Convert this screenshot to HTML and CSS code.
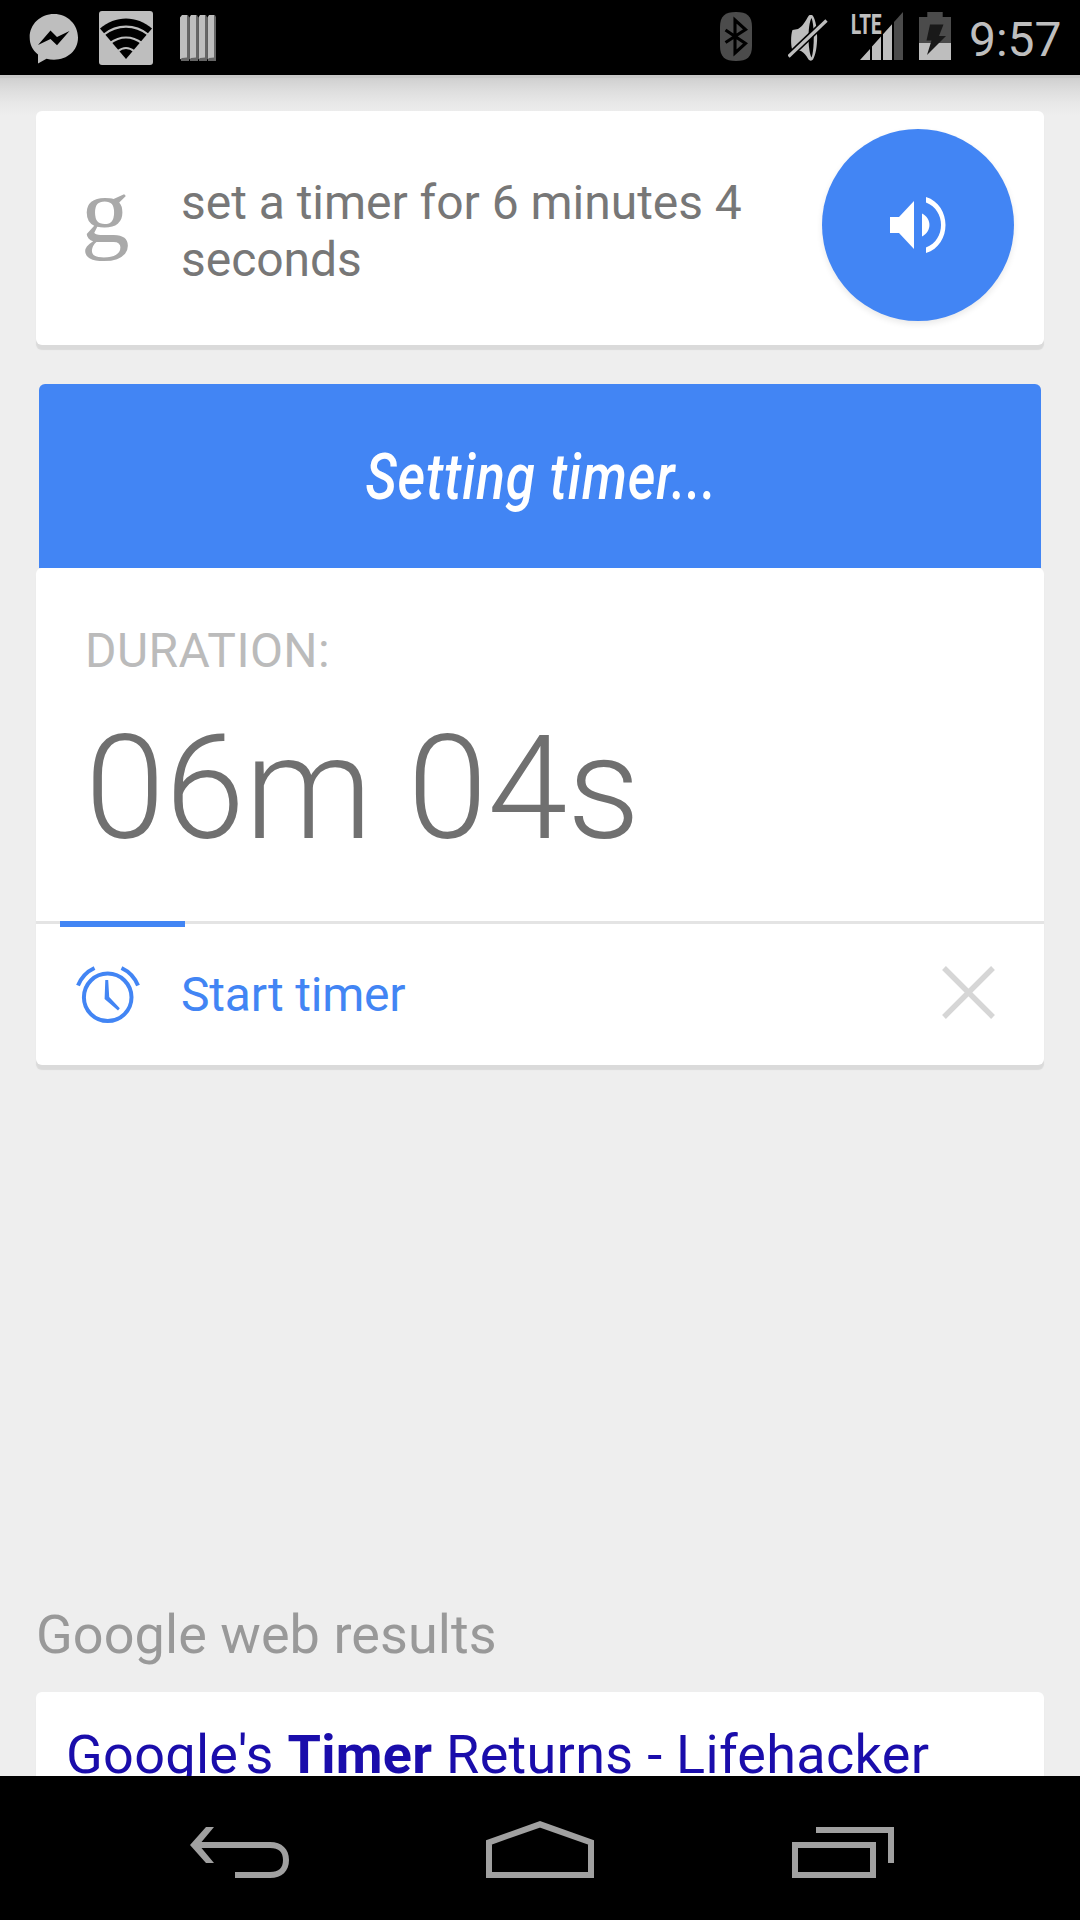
FILE: index.html
```html
<!DOCTYPE html>
<html lang="en">
<head>
<meta charset="utf-8">
<title>Set a timer</title>
<link rel="stylesheet" href="styles.css">
</head>
<body>
<div class="phone">
  <header class="status-bar">
    <div class="notifications">
      <svg width="50" height="50" viewBox="0 0 50 50"><path fill="#bebebe" d="M25 0C11.500 0 .7 10 .7 23.500c0 7 2.800 12.500 8.300 17V49.500l8.500-4.700c2.400.6 4.900.9 7.500.9C38.500 45.700 49 36.500 49 23.500S38.500 0 25 0z"/><path d="M9 31L21.500 16.500 28 23 40.500 17 28 31.300 21.500 25z"/></svg>
      <svg width="54" height="54" viewBox="0 0 54 54"><rect width="54" height="54" rx="3" fill="#bebebe"/><path d="M27 48L1 17.500C16 4 38 4 53 17.500z"/><g fill="none" stroke="#bebebe" stroke-width="2.100"><path d="M5 23.500C18 13 36 13 49 23.500M11 32.200C21 24.500 33 24.500 43 32.200M18.500 40.500C24 36 30 36 35.500 40.500"/></g></svg>
      <svg width="36" height="46" viewBox="0 0 36 46"><path fill="#666" d="M1 46V3L4 0h4l1 2v44z"/><path fill="#bebebe" d="M0 44.500V2.500L2 0h5v42.500L2 43z"/><path fill="#666" d="M10 46V3l3-3h4l1 2v44z"/><path fill="#bebebe" d="M9.500 44.500V2.500L11 0h5v42.500L11 43z"/><path fill="#666" d="M19 46V3l3-3h4l1 2v44z"/><path fill="#bebebe" d="M18.500 44.500V2.500L20 0h5v42.500L20 43z"/><path fill="#666" d="M28 46V3l3-3h4l1 2v44z"/><path fill="#bebebe" d="M27.500 44.500V2.500L29 0h5v42.500L29 43z"/></svg>
    </div>
    <div class="indicators">
      <svg class="bluetooth" width="32" height="49" viewBox="0 0 32 49"><path fill="#4b4b4b" d="M16 0C27 0 32 4 32 15v19c0 11-5 15-16 15S0 45 0 34V15C0 4 5 0 16 0z"/><path fill="none" stroke="#000" stroke-width="3.100" d="M5.500 18L25.500 31.500 15 41V8l10.500 9.500L5.500 30.500"/></svg>
      <svg class="muted" width="40" height="46" viewBox="0 0 40 46"><path fill="#bebebe" d="M4 34C2.500 28 3 19 4.500 15L10 14C15 11 17.500 6 20.500 1c1-1.500 3.500-1.500 4.500 0 5.500 9 5.500 34 0 43.500-1 1.500-3.500 1.500-4.500 0C18 40 16 38 13 36z"/><path fill="#000" d="M23.500 3c3 7 3 32 0 39.500-4-7.500-4-32.500 0-39.500z"/><path fill="none" stroke="#000" stroke-width="6.500" d="M-1 43L41 3"/><path fill="none" stroke="#bebebe" stroke-width="3.300" d="M.5 41.500L38.500 5.500"/></svg>
      <div class="signal">
        <span class="network">LTE</span>
        <svg width="44" height="48" viewBox="0 0 44 48"><g fill="#bebebe"><path d="M0 48L10 37v11zM12 34.600l9-10V48h-9zM23 22.300l9-10V48h-9z"/></g><path fill="#4b4b4b" d="M34 10L43 0v48h-9z"/></svg>
      </div>
      <svg class="battery" width="32" height="48" viewBox="0 0 32 48"><path fill="#4b4b4b" d="M8.300 0h15.400v5H32v43H0V5h8.300z"/><path fill="#bebebe" d="M0 31h32v17H0z"/><path fill="#191919" d="M11 12.500h13.500L20 24h7L8 43l4.500-14.500H7.500z"/></svg>
      <span class="clock">9:57</span>
    </div>
  </header>

  <main class="content">
    <section class="card query-card">
      <span class="g-logo">g</span>
      <p class="query">set a timer for 6 minutes 4 seconds</p>
      <button class="speak" aria-label="Speak">
        <svg width="56" height="56" viewBox="0 0 56 56"><g fill="#fff"><path d="M0 20h9L24 4v48L9 36H0zM32 16.500c10 5 10 18 0 23z"/><path d="M36 0c26 8 26 48 0 56v-5.500c20-7.500 20-37.500 0-45z"/></g></svg>
      </button>
    </section>

    <section class="timer">
      <div class="banner"><span class="banner-text">Setting timer...</span></div>
      <div class="card timer-card">
        <div class="duration">
          <p class="label">DURATION:</p>
          <p class="value">06m 04s</p>
        </div>
        <div class="action">
          <span class="progress"></span>
          <svg width="64" height="58" viewBox="0 0 64 58"><g fill="none" stroke="#4285f4" stroke-width="4"><circle cx="31.700" cy="31.300" r="23.800"/><path d="M2 19.500C5 12 11 5.500 18.500 2M45.500 2C53 5.500 59 12 62 19.500"/></g><path fill="#4285f4" d="M29.300 14h2.900L33.200 31 43.800 42.300 42 44.500 28.600 33z"/></svg>
          <span class="action-text">Start timer</span>
          <svg class="close" width="53" height="53" viewBox="0 0 53 53"><path fill="none" stroke="#d6d6d6" stroke-width="5.400" d="M2 2L51 51M51 2L2 51"/></svg>
        </div>
      </div>
    </section>

    <h2 class="results-title">Google web results</h2>
    <section class="card result-card">
      <a class="result-link">Google's <b>Timer</b> Returns - Lifehacker</a>
    </section>
  </main>

  <nav class="nav-bar">
    <svg width="100" height="57" viewBox="0 0 100 57"><path fill="#a0a0a0" d="M16 6h8L11.500 21H80C92 21 99 28 99 39s-7 18-19 18H45v-6h35c9 0 13-4 13-12s-4-12-13-12H11.500L24 42h-8L0 24z"/></svg>
    <svg class="home" width="108" height="57" viewBox="0 0 108 57"><path fill="none" stroke="#a0a0a0" stroke-width="6" d="M3 54V21.300L54 3.300l51 18V54z"/></svg>
    <svg width="102" height="51" viewBox="0 0 102 51"><g fill="none" stroke="#a0a0a0" stroke-width="6"><path d="M3 18h78v30H3zM24 3h75v33"/></g></svg>
  </nav>
</div>
</body>
</html>
```

FILE: styles.css
```css
* { box-sizing: border-box; }
body { margin: 0; font-family: Roboto, "Liberation Sans", sans-serif; }
p, h2 { margin: 0; font-weight: 400; }
svg { display: block; flex: none; }

.phone {
  width: 1080px;
  height: 1920px;
  display: flex;
  flex-direction: column;
  overflow: hidden;
  background: #eee;
}

/* Status bar */
.status-bar {
  height: 75px;
  flex: none;
  background: #000;
  display: flex;
  justify-content: space-between;
  padding: 0 19px 0 29px;
}
.notifications { display: flex; align-items: flex-start; padding-top: 11px; }
.notifications svg:nth-child(1) { margin: 3px 20px 0 0; }
.notifications svg:nth-child(2) { margin-right: 27px; }
.notifications svg:nth-child(3) { margin-top: 4px; }
.indicators { display: flex; align-items: flex-start; padding-top: 12px; }
.bluetooth { margin-right: 36px; }
.muted { margin: 3px 24px 0 0; }
.signal { position: relative; width: 51px; padding-left: 8px; margin-right: 16px; }
.network {
  position: absolute;
  left: -1px;
  top: 3px;
  font-size: 28px;
  line-height: 20px;
  font-weight: 800;
  color: #bebebe;
  transform: scaleX(.67);
  transform-origin: 0 0;
}
.battery { margin-right: 18px; }
.clock { font-size: 48px; line-height: 56px; color: #bebebe; width: 92px; }

/* Page content */
.content {
  flex: 1;
  min-height: 0;
  overflow: hidden;
  padding: 36px 36px 0;
  background:
    linear-gradient(#c8c8c8, #c8c8c8) 0 0 / 100% 3px no-repeat,
    linear-gradient(#d0d0d0, #dedede 35%, #e7e7e7 65%, #eee) 0 3px / 100% 37px no-repeat,
    #eee;
}
.card {
  background: #fff;
  border-radius: 6px;
  box-shadow: 0 5px 1px #dadada;
}

.query-card { height: 234px; display: flex; align-items: flex-start; padding: 0 30px 0 45px; }
.g-logo {
  width: 100px;
  margin-top: 61px;
  flex: none;
  font-family: "Liberation Serif", serif;
  font-size: 91px;
  line-height: 80px;
  color: #a9a9a9;
  transform: scaleX(1.07);
  transform-origin: 0 0;
}
.query {
  width: 600px;
  margin-top: 63px;
  font-size: 48px;
  line-height: 57px;
  letter-spacing: -.03px;
  color: #777;
}
.speak {
  width: 192px;
  height: 192px;
  margin: 18px 0 0 auto;
  border: 0;
  padding: 0;
  border-radius: 50%;
  background: #4285f4;
  display: flex;
  align-items: center;
  justify-content: center;
  box-shadow: 0 3px 6px rgba(0, 0, 0, .09);
}

/* Timer card */
.timer { margin-top: 39px; }
.banner {
  height: 184px;
  margin: 0 3px;
  padding: 2px 0 0 2px;
  border-radius: 6px 6px 0 0;
  background: #4285f4;
  display: flex;
  align-items: center;
  justify-content: center;
}
.banner-text {
  font-size: 65px;
  font-style: italic;
  font-weight: 500;
  letter-spacing: 1.1px;
  color: #fff;
  white-space: nowrap;
  transform: scaleX(.817);
}
.timer-card { height: 497px; }
.duration { height: 353px; padding: 54px 0 0 49px; }
.label { font-size: 48px; line-height: 57px; letter-spacing: .45px; color: #bbb; }
.value { margin-top: 35px; font-size: 144px; line-height: 150px; font-weight: 300; color: #707070; }
.action {
  position: relative;
  height: 144px;
  border-top: 3px solid #e4e4e4;
  display: flex;
  align-items: center;
  padding: 0 49px 0 40px;
}
.progress {
  position: absolute;
  left: 24px;
  top: -3px;
  width: 125px;
  height: 6px;
  background: #4285f4;
}
.action-text { margin-left: 41px; font-size: 48px; line-height: 57px; letter-spacing: -.2px; color: #4285f4; }
.close { margin: 0 0 4px auto; }

/* Web results */
.results-title { margin: 538px 0 25px; font-size: 54px; line-height: 64px; letter-spacing: .06px; color: #999; }
.result-card { height: 200px; padding: 31px 30px; }
.result-link { font-size: 54px; line-height: 64px; letter-spacing: .3px; color: #1a0dab; white-space: nowrap; }

/* Navigation bar */
.nav-bar {
  height: 144px;
  flex: none;
  background: #000;
  display: flex;
  align-items: flex-end;
  padding: 0 0 42px 190px;
}
.home { margin: 0 198px 0 196px; }
```
